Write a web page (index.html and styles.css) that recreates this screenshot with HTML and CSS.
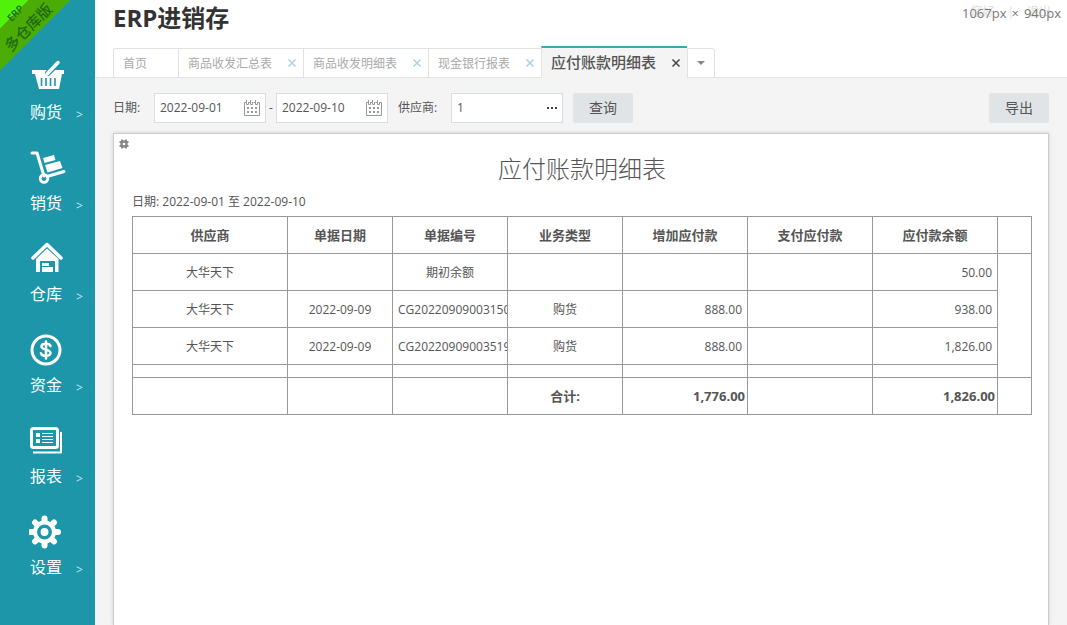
FILE: index.html
```html
<!DOCTYPE html>
<html lang="zh-CN">
<head>
<meta charset="utf-8">
<title>ERP进销存</title>
<link rel="stylesheet" href="styles.css">
</head>
<body>
<div class="app">
  <nav class="sidebar">
    <div class="ribbon"><span class="ribbon-brand">ERP</span><span class="ribbon-name">多仓库版</span></div>
    <a class="nav-item" href="#">
      <svg class="nav-icon" viewBox="0 0 38 38"><path fill="#fff" d="M3 12h32v4h-2l-3 15H10L6 16H3z"/><path stroke="#1d96aa" stroke-width="6" stroke-linecap="round" d="M19 15 29 5"/><path stroke="#fff" stroke-width="3.5" stroke-linecap="round" d="M18 16 29 4.500"/><path stroke="#1d96aa" stroke-width="1.600" d="M12.500 20v8M17 20v8M21.500 20v8M26 20v8"/></svg>
      <span class="nav-label">购货</span><span class="nav-arrow">&gt;</span>
    </a>
    <a class="nav-item" href="#">
      <svg class="nav-icon" viewBox="0 0 38 38"><path fill="none" stroke="#fff" stroke-width="3" stroke-linecap="round" stroke-linejoin="round" d="M3 4h5l7 23"/><path stroke="#fff" stroke-width="3" stroke-linecap="round" d="m18 27.500 17-5"/><circle cx="15" cy="29.500" r="3.800" fill="none" stroke="#fff" stroke-width="2.800"/><path fill="#fff" d="m14 9 11-3 1.500 5-11 3zM16 16l15-4 2.500 7-15 4.500z"/></svg>
      <span class="nav-label">销货</span><span class="nav-arrow">&gt;</span>
    </a>
    <a class="nav-item" href="#">
      <svg class="nav-icon" viewBox="0 0 38 38"><path fill="none" stroke="#fff" stroke-width="3.500" stroke-linecap="round" stroke-linejoin="round" d="M4 18 18 4.500 32 18"/><path fill="#fff" d="M18 8.500 29.500 19v13H7V19z"/><path fill="#1d96aa" d="M11 21h15v11h-2v-5H13v5h-2z"/><path fill="#fff" d="M13 23h7v3h-7zM13 27h11v5H13z"/></svg>
      <span class="nav-label">仓库</span><span class="nav-arrow">&gt;</span>
    </a>
    <a class="nav-item" href="#">
      <svg class="nav-icon" viewBox="0 0 38 38"><circle cx="17" cy="19" r="14" fill="none" stroke="#fff" stroke-width="3"/><path fill="none" stroke="#fff" stroke-width="2.500" stroke-linecap="round" stroke-linejoin="round" d="M21.500 15c-1-3-9-3-9 .6 0 3.800 9 2.200 9 6.400 0 4-8.500 3.500-9.500.3M17 10.500v17"/></svg>
      <span class="nav-label">资金</span><span class="nav-arrow">&gt;</span>
    </a>
    <a class="nav-item" href="#">
      <svg class="nav-icon" viewBox="0 0 38 38"><rect x="2.500" y="6.500" width="26" height="19" rx="2" fill="none" stroke="#fff" stroke-width="3"/><path fill="none" stroke="#fff" stroke-width="2" stroke-linejoin="round" d="M32 10v20.500H4"/><path fill="#fff" d="M7 11h4v4H7zM7 17h4v4H7zM13 11h11v1H13zM13 14h11v1H13zM13 17h11v1H13zM13 20h11v1H13z"/></svg>
      <span class="nav-label">报表</span><span class="nav-arrow">&gt;</span>
    </a>
    <a class="nav-item" href="#">
      <svg class="nav-icon" viewBox="0 0 38 38"><g transform="translate(15.500 19)"><path stroke="#fff" stroke-width="6" stroke-linecap="round" d="M0-13.500v27M-13.500 0h27M-9.500-9.500l19 19M-9.500 9.500l19-19"/><circle r="11.500" fill="#fff"/><circle r="5.700" fill="#fff" stroke="#1d96aa" stroke-width="3.500"/></g></svg>
      <span class="nav-label">设置</span><span class="nav-arrow">&gt;</span>
    </a>
  </nav>

  <div class="main">
    <header class="header">
      <h1 class="brand">ERP进销存</h1>
      <div class="account">您好<span>|</span>退出</div>
      <div class="viewport-size"><span>1067px</span><span>×</span><span>940px</span></div>
      <div class="tabs">
        <div class="tab tab-home"><a href="#">首页</a></div>
        <div class="tab"><a href="#">商品收发汇总表</a><button class="tab-close" aria-label="关闭"><svg viewBox="0 0 10 10"><path d="m1.500 1.500 7 7m0-7-7 7"/></svg></button></div>
        <div class="tab"><a href="#">商品收发明细表</a><button class="tab-close" aria-label="关闭"><svg viewBox="0 0 10 10"><path d="m1.500 1.500 7 7m0-7-7 7"/></svg></button></div>
        <div class="tab"><a href="#">现金银行报表</a><button class="tab-close" aria-label="关闭"><svg viewBox="0 0 10 10"><path d="m1.500 1.500 7 7m0-7-7 7"/></svg></button></div>
        <div class="tab tab-active"><a href="#">应付账款明细表</a><button class="tab-close" aria-label="关闭"><svg viewBox="0 0 10 10"><path d="m1.500 1.500 7 7m0-7-7 7"/></svg></button></div>
        <button class="tab-more" aria-label="更多标签"><svg viewBox="0 0 8 4"><path d="M0 0h8L4 4z"/></svg></button>
      </div>
    </header>

    <form class="filters">
      <label class="filter-label" for="from">日期:</label>
      <div class="field">
        <input id="from" type="text" value="2022-09-01">
        <svg class="calendar" viewBox="0 0 16 16"><path fill="none" stroke="#999" d="M2.500 2.500h-2v13h15v-13h-2M4.500 2.500h2M9.500 2.500h2M2.500 0v4.500h2V2M6.500 0v4.500h2V2M11.500 0v4.500h2V2"/><path fill="#999" d="M3 7h2v2H3zM7 7h2v2H7zM11 7h2v2h-2zM3 11h2v2H3zM7 11h2v2H7zM11 11h2v2h-2z"/></svg>
      </div>
      <span class="dash">-</span>
      <div class="field">
        <input id="to" type="text" value="2022-09-10" aria-label="结束日期">
        <svg class="calendar" viewBox="0 0 16 16"><path fill="none" stroke="#999" d="M2.500 2.500h-2v13h15v-13h-2M4.500 2.500h2M9.500 2.500h2M2.500 0v4.500h2V2M6.500 0v4.500h2V2M11.500 0v4.500h2V2"/><path fill="#999" d="M3 7h2v2H3zM7 7h2v2H7zM11 7h2v2h-2zM3 11h2v2H3zM7 11h2v2H7zM11 11h2v2h-2z"/></svg>
      </div>
      <label class="filter-label supplier-label" for="supplier">供应商:</label>
      <div class="field">
        <input id="supplier" type="text" value="1">
        <button type="button" class="pick" aria-label="选择供应商"><svg viewBox="0 0 10 2"><path d="M0 0h2v2H0zM4 0h2v2H4zM8 0h2v2H8z"/></svg></button>
      </div>
      <button type="button" class="btn btn-query">查询</button>
      <button type="button" class="btn btn-export">导出</button>
    </form>

    <section class="paper">
      <button class="config" aria-label="列设置"><svg viewBox="0 0 10 10"><path stroke="#888" stroke-width="2" d="M3 .5v9M7 .5v9M.5 3h9M.5 7h9"/><circle cx="5" cy="5" r="2.700" fill="none" stroke="#888" stroke-width="2"/><circle cx="5" cy="5" r="1.300" fill="#fff"/></svg></button>
      <h2 class="title">应付账款明细表</h2>
      <p class="period">日期: 2022-09-01 至 2022-09-10</p>
      <table class="report">
        <colgroup><col class="c-supplier"><col class="c-date"><col class="c-mid"><col class="c-mid"><col class="c-money"><col class="c-money"><col class="c-money"><col></colgroup>
        <thead><tr><th>供应商</th><th>单据日期</th><th>单据编号</th><th>业务类型</th><th>增加应付款</th><th>支付应付款</th><th>应付款余额</th><th></th></tr></thead>
        <tbody>
          <tr><td>大华天下</td><td></td><td>期初余额</td><td></td><td></td><td></td><td class="num">50.00</td><td rowspan="4"></td></tr>
          <tr><td>大华天下</td><td>2022-09-09</td><td class="code">CG202209090031500</td><td>购货</td><td class="num">888.00</td><td></td><td class="num">938.00</td></tr>
          <tr><td>大华天下</td><td>2022-09-09</td><td class="code">CG202209090035192</td><td>购货</td><td class="num">888.00</td><td></td><td class="num">1,826.00</td></tr>
          <tr class="spacer"><td></td><td></td><td></td><td></td><td></td><td></td><td></td></tr>
        </tbody>
        <tfoot><tr><td></td><td></td><td></td><td>合计:</td><td class="num">1,776.00</td><td></td><td class="num">1,826.00</td><td></td></tr></tfoot>
      </table>
    </section>
  </div>
</div>
</body>
</html>
```

FILE: styles.css
```css
* { box-sizing: border-box; }
body { margin: 0; background: #f4f4f4; color: #555; font: 12px/18px "Open Sans", "Noto Sans CJK SC", sans-serif; }
a { color: inherit; text-decoration: none; }
button, input { font: inherit; color: inherit; }
button { border: 0; padding: 0; background: none; cursor: pointer; }
svg { display: block; }

.app { display: flex; min-height: 100vh; }

.sidebar { position: relative; flex: none; width: 95px; padding-top: 58px; background: #1d96aa; color: #fff; overflow: hidden; }
.ribbon { position: absolute; top: 0; left: 0; width: 70px; height: 70px; background: linear-gradient(135deg, #51f10c 0 20px, #4aac05 20px 50%, transparent 50%); color: #1f6a12; font-weight: 700; }
.ribbon-brand, .ribbon-name { position: absolute; transform: translate(-50%, -50%) rotate(-45deg); white-space: nowrap; }
.ribbon-brand { top: 13px; left: 15px; font-size: 10px; font-weight: 600; }
.ribbon-name { top: 27px; left: 28px; font-size: 15px; font-weight: 500; }
.nav-item { display: grid; grid-template: 38px 28px / 34px 1fr; column-gap: 10px; align-content: start; align-items: end; height: 91px; padding-left: 29px; }
.nav-icon { grid-column: 1 / -1; width: 38px; height: 38px; }
.nav-label { padding-left: 1px; font-size: 16px; line-height: 24px; }
.nav-arrow { padding-left: 3px; color: #c5e5ea; }

.main { flex: 1; min-width: 0; display: flex; flex-direction: column; }
.header { position: relative; padding: 3px 0 0 18px; background: #fff; border-bottom: 1px solid #e2e2e2; }
.brand { margin: 0; color: #333; font-size: 24px; line-height: 30px; }
.viewport-size, .account { position: absolute; top: 3px; right: 6px; font-size: 13px; line-height: 20px; color: #777; }
.viewport-size { display: flex; gap: 5px; }
.account { top: 2px; right: 16px; font-size: 12px; color: #ddd; }
.account span { padding: 0 13px; }

.tabs { display: flex; align-items: flex-end; margin: 13px 0 -1px; }
.tab { display: flex; align-items: center; gap: 15px; height: 30px; padding: 0 6px 0 9px; border: 1px solid #e2e2e2; border-right: 0; color: #aaa; }
.tab:first-child { border-top-left-radius: 3px; }
.tab a { padding-top: 1px; }
.tab-home { padding-right: 31px; }
.tab-close { width: 10px; height: 10px; }
.tab-close path { stroke: #afcfe6; stroke-width: 1.5; }
.tab-active { height: 32px; border-top: 2px solid #3ba6bb; border-bottom-color: #f4f4f4; background: #f4f4f4; color: #555; font-size: 15px; font-weight: 500; }
.tab-active a { padding: 0 0 2px; }
.tab-active .tab-close path { stroke: #444; }
.tab-more { display: grid; place-items: center; width: 28px; height: 30px; border: 1px solid #e2e2e2; border-top-right-radius: 3px; }
.tab-more svg { width: 8px; height: 4px; fill: #888; }

.filters { display: flex; align-items: center; padding: 15px 18px 10px; }
.filter-label { width: 41px; }
.field { display: flex; align-items: center; justify-content: space-between; width: 112px; height: 30px; padding: 0 5px; background: #fff; border: 1px solid #d6dee3; }
.field input { width: 80px; min-width: 0; padding: 0; border: 0; outline: 0; background: none; }
.calendar { width: 16px; height: 16px; }
.dash { width: 10px; text-align: center; }
.supplier-label { width: 53px; margin-left: 10px; }
.pick svg { width: 10px; height: 2px; fill: #444; }
.btn { width: 60px; height: 30px; border-radius: 2px; background: #e0e4e7; font-size: 14px; }
.btn-query { margin-left: 10px; }
.btn-export { margin-left: auto; }

.paper { position: relative; flex: 1; margin: 0 18px; padding: 19px 16px 18px 18px; background: #fff; border: 1px solid #ccc; border-bottom: 0; box-shadow: 0 0 4px rgba(0, 0, 0, .15); }
.config { position: absolute; top: 5px; left: 5px; width: 10px; height: 10px; }
.config svg { width: 10px; height: 10px; }
.title { margin: 0; font-size: 24px; line-height: 32px; font-weight: 300; text-align: center; }
.period { margin: 8px 0 5px; }
.report { width: 100%; table-layout: fixed; border-collapse: separate; border-spacing: 0; border: solid #999; border-width: 1px 0 0 1px; }
.c-supplier { width: 155px; }
.c-date { width: 105px; }
.c-mid { width: 115px; }
.c-money { width: 125px; }
.report th, .report td { height: 37px; padding: 0 5px; border: solid #999; border-width: 0 1px 1px 0; text-align: center; white-space: nowrap; overflow: hidden; }
.report tbody td { padding-top: 2px; }
.report th, .report tfoot td { font-size: 13px; font-weight: 700; }
.report .num { text-align: right; }
.report tfoot .num { padding: 0 2px; }
.report .code { padding-right: 0; text-align: left; }
.report .spacer td { height: 13px; }
```
